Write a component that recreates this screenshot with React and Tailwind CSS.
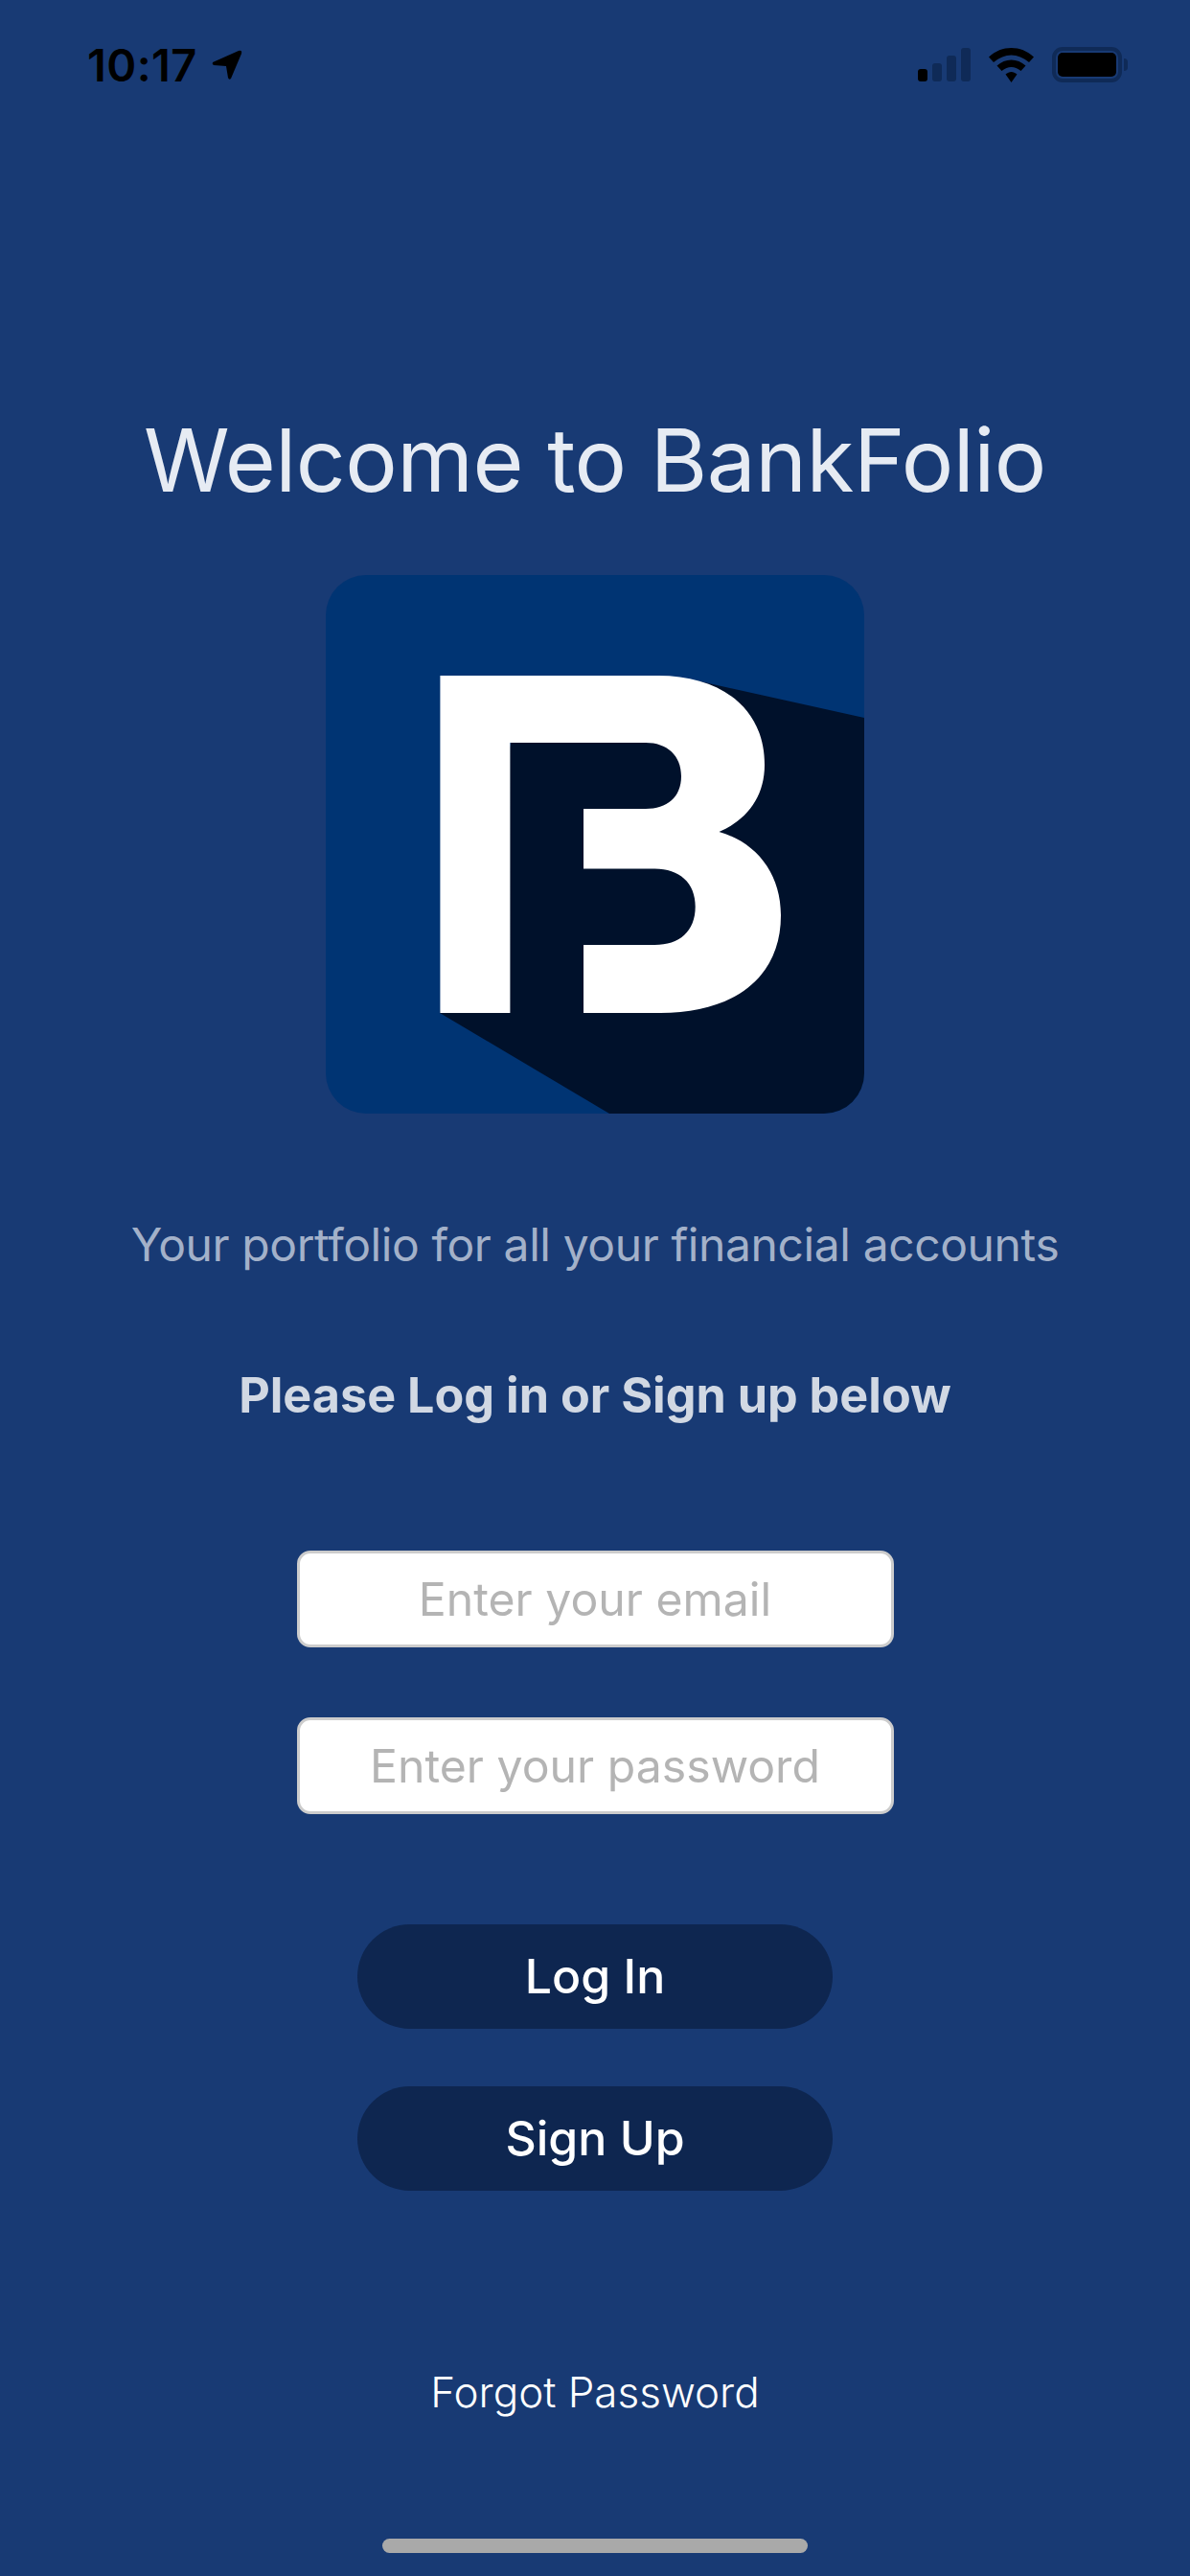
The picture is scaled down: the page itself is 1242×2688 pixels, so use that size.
import React from 'react';

const StatusBar = () => (
  <div className="w-full h-[37px] mt-[49px] pl-[91px] pr-[65px] flex items-center justify-between text-black shrink-0">
    <div className="flex items-center gap-[15px]">
      <span className="text-[47px] leading-none font-semibold font-['Inter',sans-serif] tracking-[0.4px]">10:17</span>
      <svg width="32" height="32" viewBox="0 0 32 32">
        <path d="M1 13 L28 1 Q32 0 31 4 L20 30 Q18 32 17 29 L15 17 L2 16 Q0 15 1 13 Z" fill="#000" />
      </svg>
    </div>
    <div className="flex items-center gap-[19px]">
      <svg width="55" height="36" viewBox="0 0 55 36">
        <rect x="0" y="22" width="10" height="13" rx="3" fill="#000" />
        <rect x="15" y="16" width="10" height="19" rx="3" fill="#0f2a57" />
        <rect x="30" y="8" width="10" height="27" rx="3" fill="#0f2a57" />
        <rect x="45" y="0" width="10" height="35" rx="3" fill="#0f2a57" />
      </svg>
      <svg width="47" height="36" viewBox="0 0 47 36">
        <path d="M23.5 0 C32 0 40 3 47 9.5 L42 15 C36 10 30 7.5 23.5 7.5 C17 7.5 11 10 5 15 L0 9.5 C7 3 15 0 23.5 0 Z" fill="#000" />
        <path d="M23.5 12.5 C29 12.5 34 14.5 38.5 18.5 L33.5 24 C30 21.5 27 20 23.5 20 C20 20 17 21.5 13.5 24 L8.5 18.5 C13 14.5 18 12.5 23.5 12.5 Z" fill="#000" />
        <path d="M23.5 25 C25.5 25 27.5 26 29.5 27.5 L23.5 36 L17.5 27.5 C19.5 26 21.5 25 23.5 25 Z" fill="#000" />
      </svg>
      <div className="flex items-center gap-[2px]">
        <div className="w-[73px] h-[37px] rounded-[11px] border-[4px] border-[#0f2a57] p-[2px]">
          <div className="w-full h-full rounded-[5px] bg-black" />
        </div>
        <div className="w-[4px] h-[13px] rounded-r-full bg-[#0f2a57]" />
      </div>
    </div>
  </div>
);

const Logo = () => (
  <svg width="562" height="562" viewBox="0 0 562 562" className="mt-[67px] shrink-0">
    <defs>
      <clipPath id="logo-clip">
        <rect width="562" height="562" rx="42" />
      </clipPath>
    </defs>
    <g clipPath="url(#logo-clip)">
      <rect width="562" height="562" fill="#003473" />
      <path d="M119 457 L296 562 L562 562 L562 149 L386 110 L200 150 Z" fill="#00112b" />
      <path
        fillRule="evenodd"
        d="M119.4 105 L347 105 C414 105 458 140 458 198 C458 232 439 256 410.5 268 C449 279 475 311 475 355 C475 421 425 457 349 457 L269 457 L269 386 L343.5 386 C369 386 385.7 372 385.7 346 C385.7 321 369 306.4 343.5 306.4 L269 306.4 L269 244 L334 244 C356 244 371 232 371 210 C371 188 356 175 334 175 L192.4 175 L192.4 457 L119.4 457 Z"
        fill="#fff"
      />
    </g>
  </svg>
);

const Field = ({ placeholder, className = '' }) => (
  <input
    readOnly
    placeholder={placeholder}
    className={`block shrink-0 w-[623px] h-[101px] bg-white rounded-[14px] border-[3px] border-[#cccccc] text-center text-[48.2px] font-['Inter',sans-serif] font-normal placeholder:text-[#b4b4b4] outline-none ${className}`}
  />
);

const Pill = ({ children, className = '' }) => (
  <button className={`block shrink-0 w-[496px] h-[109px] rounded-full bg-[#0e2650] text-white text-[50px] font-medium font-['Inter',sans-serif] ${className}`}>
    {children}
  </button>
);

export default function App() {
  return (
    <div className="w-[1242px] h-[2688px] bg-[#183a74] flex flex-col items-center font-['Inter',sans-serif]">
      <StatusBar />
      <h1 className="mt-[341px] h-[106px] leading-[106px] text-[91px] font-normal tracking-[-0.5px] text-[#e6ebf3] shrink-0">Welcome to BankFolio</h1>
      <Logo />
      <p className="mt-[109px] h-[56px] leading-[56px] text-[48px] font-normal tracking-[-0.4px] text-[#a3b1c9] shrink-0">Your portfolio for all your financial accounts</p>
      <p className="mt-[101px] h-[56px] leading-[56px] text-[50.3px] font-bold text-[#d1d8e3] shrink-0">Please Log in or Sign up below</p>
      <Field placeholder="Enter your email" className="mt-[134px]" />
      <Field placeholder="Enter your password" className="mt-[73px]" />
      <Pill className="mt-[115px]">Log In</Pill>
      <Pill className="mt-[60px]">Sign Up</Pill>
      <a className="mt-[182px] h-[56px] leading-[56px] text-[44px] font-light text-white shrink-0">Forgot Password</a>
      <div className="mt-[125px] w-[444px] h-[15px] rounded-full bg-[#a9a9a9] shrink-0" />
    </div>
  );
}
